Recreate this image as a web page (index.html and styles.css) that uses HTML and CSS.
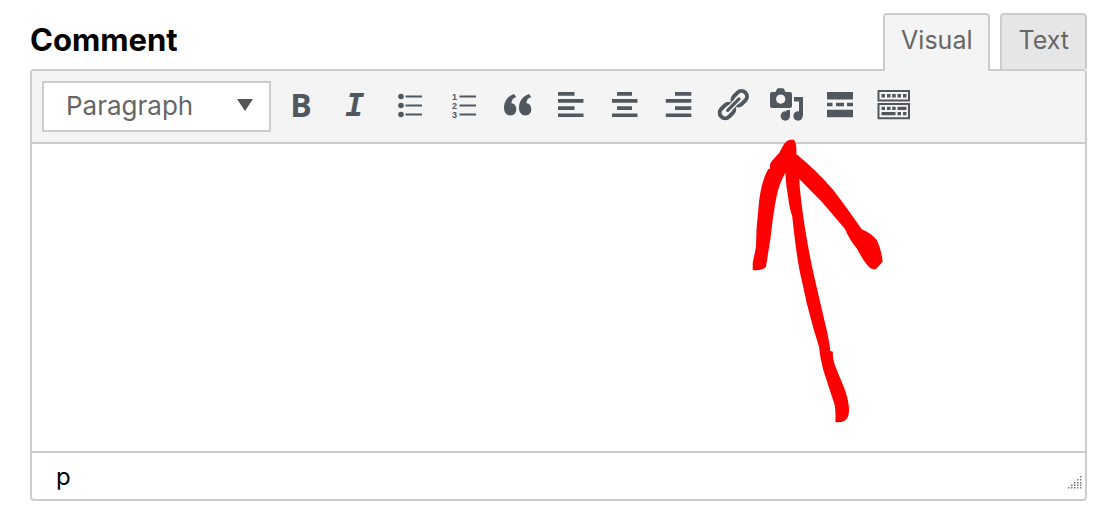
FILE: index.html
```
<!DOCTYPE html>
<html lang="en">
<head>
    <meta charset="UTF-8">
    <meta name="viewport" content="width=device-width, initial-scale=1.0">
    <title>Comment</title>
    <link rel="stylesheet" href="styles.css">
</head>
<body>

    <form class="comment-form">
        <div class="editor-header">
            <label class="editor-label" for="comment">Comment</label>
            <div class="editor-tabs">
                <button type="button" class="tab active">Visual</button>
                <button type="button" class="tab">Text</button>
            </div>
        </div>

        <div class="editor">
            <div class="toolbar">
                <div class="format-select">
                    <select aria-label="Format">
                        <option>Paragraph</option>
                        <option>Heading 1</option>
                        <option>Heading 2</option>
                        <option>Preformatted</option>
                    </select>
                </div>
                <button type="button" class="tool bold" aria-label="Bold">B</button>
                <button type="button" class="tool italic" aria-label="Italic">I</button>
                <button type="button" class="tool" aria-label="Bulleted list">
                    <svg viewBox="0 0 40 40">
                        <circle cx="12" cy="11.5" r="2.8"/>
                        <circle cx="12" cy="20.5" r="2.8"/>
                        <circle cx="12" cy="29.5" r="2.8"/>
                        <path d="M16.5 10.5H33v2H16.5zM16.5 19.5H33v2H16.5zM16.5 28.5H33v2H16.5z"/>
                    </svg>
                </button>
                <button type="button" class="tool" aria-label="Numbered list">
                    <svg viewBox="0 0 40 40">
                        <text x="9" y="15">1</text>
                        <text x="9" y="24">2</text>
                        <text x="9" y="33">3</text>
                        <path d="M16.5 10.5H33v2H16.5zM16.5 19.5H33v2H16.5zM16.5 28.5H33v2H16.5z"/>
                    </svg>
                </button>
                <button type="button" class="tool" aria-label="Blockquote">
                    <svg viewBox="0 0 40 40">
                        <path d="M17 9l2.200 3C16 13 14.500 15 14.500 18.300C17.500 18.500 19.300 21 19.300 24.300C19.300 28 17 30.500 13.500 30.500C9.500 30.500 7 27.500 7 22.800C7 16 11 11 17 9z"/>
                        <path d="M32 9l2.200 3C31 13 29.500 15 29.500 18.300C32.500 18.500 34.300 21 34.300 24.300C34.300 28 32 30.500 28.500 30.500C24.500 30.500 22 27.500 22 22.800C22 16 26 11 32 9z"/>
                    </svg>
                </button>
                <button type="button" class="tool" aria-label="Align left">
                    <svg viewBox="0 0 40 40">
                        <path d="M7 7h16.500v3.700H7zM7 14h25.500v3.700H7zM7 21.300h16.500V25H7zM7 28.400h25.500v3.700H7z"/>
                    </svg>
                </button>
                <button type="button" class="tool" aria-label="Align center">
                    <svg viewBox="0 0 40 40">
                        <path d="M12 7h15v3.700H12zM7 14h25.500v3.700H7zM12 21.300h15V25H12zM7 28.400h25.500v3.700H7z"/>
                    </svg>
                </button>
                <button type="button" class="tool" aria-label="Align right">
                    <svg viewBox="0 0 40 40">
                        <path d="M16 7h16.300v3.700H16zM6.800 14h25.500v3.700H6.800zM16 21.300h16.300V25H16zM6.800 28.400h25.500v3.700H6.800z"/>
                    </svg>
                </button>
                <button type="button" class="tool" aria-label="Insert link">
                    <svg viewBox="0 0 40 40">
                        <g class="link-ring" transform="rotate(-45 20 20)">
                            <rect x="3.500" y="14.500" width="16" height="11" rx="5.500"/>
                            <rect x="21.500" y="14.500" width="16" height="11" rx="5.500"/>
                            <path class="link-gap" d="M12.500 20h16"/>
                            <path class="link-bar" d="M12.500 20h16"/>
                        </g>
                    </svg>
                </button>
                <button type="button" class="tool" aria-label="Add media">
                    <svg viewBox="0 0 40 40">
                        <path fill-rule="evenodd" d="M5 7h3.500l1.500-3q.300-.700 1-.700h5q.700 0 1 .700l1.500 3H23q2 0 2 2v12q0 2-2 2H5q-2 0-2-2V9q0-2 2-2zM13.700 9.500a4.600 4.600 0 1 0 .001 0z"/>
                        <path d="M27 12h9v19h-4V16.500h-5z"/>
                        <ellipse cx="31" cy="31" rx="4.700" ry="4.700"/>
                        <path d="M19.500 25H23v6h-3.500z"/>
                        <ellipse cx="18.300" cy="31" rx="4.700" ry="4.700"/>
                    </svg>
                </button>
                <button type="button" class="tool" aria-label="Insert Read More tag">
                    <svg viewBox="0 0 40 40">
                        <path d="M6 7h26v7.500H6zM6 17.800h5.500v3.500H6zM15 17.800h8v3.500h-8zM26 17.800h6v3.500h-6zM6 24.700h26v7.500H6z"/>
                    </svg>
                </button>
                <button type="button" class="tool" aria-label="Toolbar toggle">
                    <svg viewBox="0 0 40 40">
                        <path fill-rule="evenodd" d="M2.500 5H35v11.500H2.500zM4.500 7v7.500H33V7zM2.500 18H35v16.300H2.500zM4.500 20v12.300H33V20z"/>
                        <path d="M6.500 9H10v3.500H6.500zM12 9h3.500v3.500H12zM17.200 9h3.500v3.500h-3.500zM22.500 9H26v3.500h-3.500zM28 9h3.500v3.500H28z"/>
                        <path d="M6.500 21.800H10V25H6.500zM12 21.800h3.500V25H12zM17.200 21.800h3.500V25h-3.500zM22.500 21.800h9V25h-9z"/>
                        <path d="M6.500 27h14v3.200h-14zM22.500 27H26v3.200h-3.500zM28 27h3.500v3.200H28z"/>
                    </svg>
                </button>
            </div>

            <textarea id="comment" class="editor-content" name="comment"></textarea>

            <div class="statusbar">
                <span class="path">p</span>
                <svg class="resize-handle" viewBox="0 0 14 14">
                    <path d="M12 1h1.500v1.500H12zM9 4h1.500v1.500H9zM12 4h1.500v1.500H12zM6 7h1.500v1.500H6zM9 7h1.500v1.500H9zM12 7h1.500v1.500H12zM3 9.500h1.500V11H3zM6 9.500h1.500V11H6zM9 9.500h1.500V11H9zM12 9.500h1.500V11H12zM0 12h1.500v1.500H0zM3 12h1.500v1.500H3zM6 12h1.500v1.500H6zM9 12h1.500v1.500H9zM12 12h1.500v1.500H12z"/>
                </svg>
            </div>

            <!-- Hand drawn arrow pointing at the media button -->
            <svg class="arrow" viewBox="0 0 140 290" aria-hidden="true">
                <path d="M34 6Q37 2 40 1.700L44 1.700Q47 6 46.300 16Q66 32 83.300 52Q97 70 111.700 91.300Q121 95 126.700 102Q131 110 132.700 123.700L126 131Q122 132 119.300 129.300Q114 124 106.700 110.300Q99 101 95 91L72 64L49.300 41Q50 58 55 90Q59 116 65 142L76.700 192Q80 207 80.300 213L83 213.700Q82 220 86 230L95 252Q99 264 99 272Q99 286 85.300 284Q86 276 84.700 267L73.300 232Q70 220 69 208.700L63.300 190L56.700 165L51.700 142Q47 124 42.300 78.700Q39 68 38.300 60.300Q36 48 35.300 34.700Q29 46 26.700 58Q23 76 20.700 98.700L16 128.700Q13 133 2.700 132V125.300L6 108.700Q6 90 8.300 72Q10 46 18 31.300L20.300 30.300Q19 27 21.500 23.500L29.300 14.700Z"/>
            </svg>
        </div>
    </form>

</body>
</html>
```
FILE: styles.css
```
body {
    margin: 0;
    padding: 13px 29px 13px 30px;
    font-family: Inter, "Liberation Sans", sans-serif;
    background-color: #fff;
}
button, select, textarea {
    font-family: inherit;
    box-sizing: border-box;
}
.editor-header {
    display: flex;
    justify-content: space-between;
}
.editor-label {
    font-size: 31px;
    font-weight: 700;
    line-height: 54px;
    color: #000;
}
.editor-tabs {
    display: flex;
    gap: 10px;
}
.tab {
    height: 56px;
    padding: 0 16px 5px 16px;
    border: 2px solid #ccc;
    border-bottom: none;
    border-radius: 4px 4px 0 0;
    background-color: #e6e6e6;
    color: #666;
    font-size: 25px;
    cursor: pointer;
}
.tab.active {
    position: relative;
    z-index: 1;
    height: 58px;
    margin-bottom: -2px;
    padding-bottom: 7px;
    background-color: #f4f4f4;
}
.editor {
    position: relative;
    border: 2px solid #ccc;
    border-radius: 4px;
}
.toolbar {
    display: flex;
    align-items: center;
    gap: 14px;
    padding: 10px;
    background-color: #f4f4f4;
    border-bottom: 2px solid #ccc;
}
.format-select {
    position: relative;
    width: 229px;
    margin-right: -4px;
}
.format-select::after {
    content: "";
    position: absolute;
    top: 18px;
    right: 18px;
    border: 8px solid transparent;
    border-top: 12px solid #555;
    border-bottom: none;
    pointer-events: none;
}
.format-select select {
    display: block;
    width: 100%;
    height: 51px;
    padding: 0 22px 2px 22px;
    border: 2px solid #ccc;
    border-radius: 0;
    background-color: #fff;
    color: #666;
    font-size: 26px;
    appearance: none;
}
.tool {
    flex: none;
    width: 40px;
    height: 40px;
    margin-bottom: 3px;
    padding: 0;
    border: none;
    background: none;
    color: #50575e;
    cursor: pointer;
}
.tool svg {
    display: block;
    width: 40px;
    height: 40px;
    fill: currentColor;
}
.tool text {
    font-family: "Liberation Sans", Arial, sans-serif;
    font-size: 9px;
    font-weight: 700;
}
.bold {
    font-family: "Open Sans", sans-serif;
    font-size: 32px;
    font-weight: 700;
    line-height: 40px;
}
.italic {
    font-family: "DejaVu Sans Mono", monospace;
    font-size: 32px;
    font-style: italic;
    font-weight: 700;
    line-height: 40px;
}
.link-ring {
    fill: none;
    stroke: #50575e;
    stroke-width: 4;
}
.link-gap {
    stroke: #f4f4f4;
    stroke-width: 6;
}
.link-bar {
    stroke-width: 3.2;
    stroke-linecap: round;
}
.editor-content {
    display: block;
    width: 100%;
    height: 307px;
    padding: 20px 24px;
    border: none;
    outline: none;
    resize: none;
    font-size: 26px;
}
.statusbar {
    display: flex;
    align-items: center;
    justify-content: space-between;
    height: 46px;
    padding: 0 3px 0 24px;
    border-top: 2px solid #ccc;
}
.path {
    font-size: 24px;
    color: #000;
}
.resize-handle {
    align-self: flex-end;
    width: 14px;
    height: 14px;
    margin-bottom: 10px;
    fill: #777;
}
.arrow {
    position: absolute;
    top: 67px;
    left: 718px;
    width: 140px;
    height: 290px;
    fill: #f00;
    pointer-events: none;
}
```
